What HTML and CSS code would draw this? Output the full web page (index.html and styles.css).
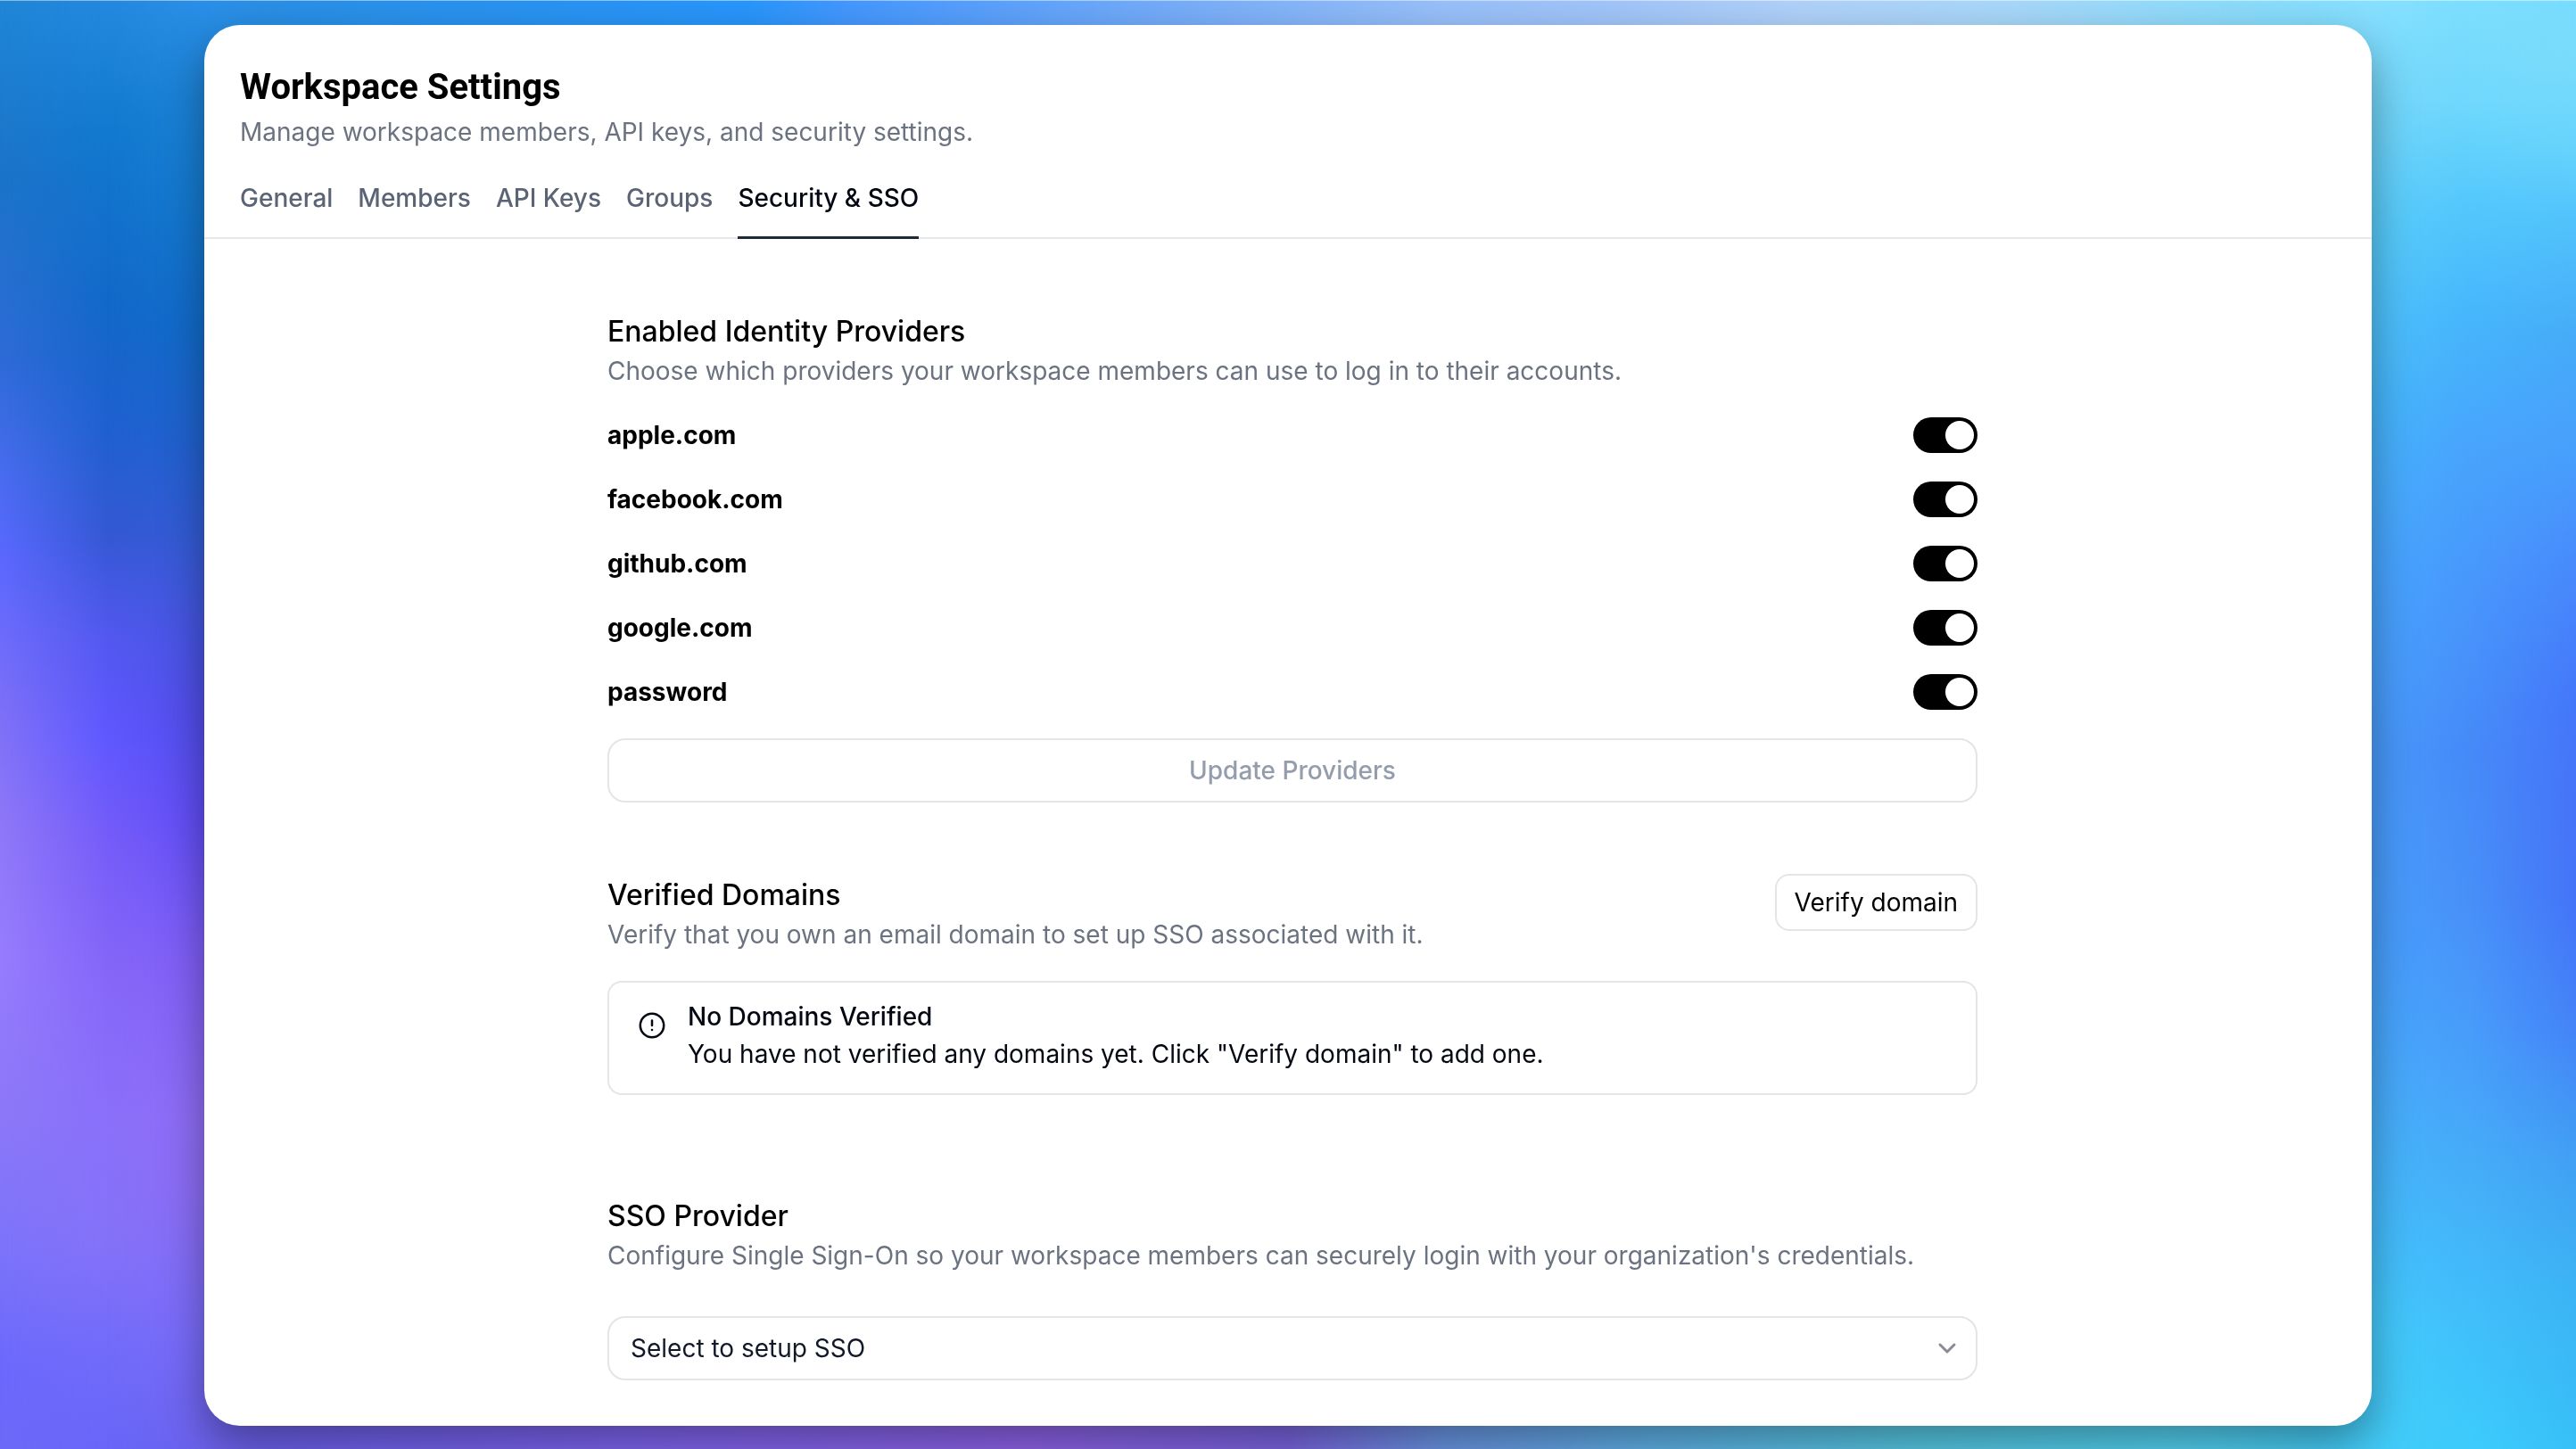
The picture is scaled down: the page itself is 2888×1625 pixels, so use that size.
FILE: index.html
```html
<!DOCTYPE html>
<html lang="en">
<head>
<meta charset="utf-8">
<meta name="viewport" content="width=device-width, initial-scale=1">
<title>Workspace Settings</title>
<link rel="stylesheet" href="styles.css">
</head>
<body>
<div class="side side-left" aria-hidden="true"></div>
<div class="side side-right" aria-hidden="true"></div>
<div class="card">
  <header class="header">
    <h1 class="title">Workspace Settings</h1>
    <p class="muted">Manage workspace members, API keys, and security settings.</p>
    <nav class="tabs" aria-label="Settings sections">
      <a class="tab" href="#general">General</a>
      <a class="tab" href="#members">Members</a>
      <a class="tab" href="#api-keys">API Keys</a>
      <a class="tab" href="#groups">Groups</a>
      <a class="tab tab-active" href="#security" aria-current="page">Security &amp; SSO</a>
    </nav>
  </header>
  <main class="content" id="security">
    <section class="section">
      <h2 class="heading">Enabled Identity Providers</h2>
      <p class="muted">Choose which providers your workspace members can use to log in to their accounts.</p>
      <div class="providers">
        <div class="provider"><label for="p-apple">apple.com</label><input class="switch" type="checkbox" role="switch" id="p-apple" checked></div>
        <div class="provider"><label for="p-facebook">facebook.com</label><input class="switch" type="checkbox" role="switch" id="p-facebook" checked></div>
        <div class="provider"><label for="p-github">github.com</label><input class="switch" type="checkbox" role="switch" id="p-github" checked></div>
        <div class="provider"><label for="p-google">google.com</label><input class="switch" type="checkbox" role="switch" id="p-google" checked></div>
        <div class="provider"><label for="p-password">password</label><input class="switch" type="checkbox" role="switch" id="p-password" checked></div>
      </div>
      <button class="button button-wide" type="button" disabled>Update Providers</button>
    </section>
    <section class="section">
      <div class="section-top">
        <div>
          <h2 class="heading">Verified Domains</h2>
          <p class="muted">Verify that you own an email domain to set up SSO associated with it.</p>
        </div>
        <button class="button button-small" type="button">Verify domain</button>
      </div>
      <div class="alert">
        <svg class="alert-icon" viewBox="0 0 32 32" fill="none" stroke="currentColor" stroke-width="2.5" stroke-linecap="round" aria-hidden="true">
          <circle cx="16" cy="16" r="13.2"/>
          <path d="M16 10.5v5.5M16 21v.1"/>
        </svg>
        <div>
          <h3 class="alert-title">No Domains Verified</h3>
          <p class="alert-text">You have not verified any domains yet. Click "Verify domain" to add one.</p>
        </div>
      </div>
    </section>
    <section class="section section-sso">
      <h2 class="heading"><label for="sso">SSO Provider</label></h2>
      <p class="muted">Configure Single Sign-On so your workspace members can securely login with your organization's credentials.</p>
      <div class="select-wrap">
        <select class="select" id="sso">
          <option>Select to setup SSO</option>
        </select>
        <svg class="chevron" viewBox="0 0 24 24" fill="none" stroke="currentColor" stroke-width="3" stroke-linecap="round" stroke-linejoin="round" aria-hidden="true"><path d="M4 8l8 8 8-8"/></svg>
      </div>
    </section>
  </main>
</div>
</body>
</html>
```
FILE: styles.css
```css
* { box-sizing: border-box; margin: 0; }

body {
  min-height: 100vh;
  padding: 27px 229px 28px;
  border-top: 1px solid rgba(255, 255, 255, .45);
  font-family: Inter, "Liberation Sans", sans-serif;
  font-size: 28px;
  line-height: 40px;
  color: #000;
  background:
    linear-gradient(to right, #1b86cf, #2a90e4 8%, #2896fc 29%, #4498ff 33%, #74acfa 45%, #98c0fa 56%, #a2c6fa 63%, #b0d2fa 70%, #a8d8fa 78%, #90dcfc 85%, #78dcfe) top / 100% 50% no-repeat,
    linear-gradient(to right, #6c6af8, #7062f0 12%, #8066f4 24%, #9064ec 40%, #7c66e4 50%, #6c98e8 56%, #60b4ec 64%, #58cce8 74%, #54d4f4 84%, #44ccf8) bottom / 100% 50% no-repeat;
}

/* Colour fields either side of the card: three vertical ramps blended across */
.side { position: fixed; top: 0; bottom: 0; width: 400px; z-index: -1; }
.side::before, .side::after { content: ""; position: absolute; inset: 0; }
.side-left {
  left: 0;
  background: linear-gradient(#1f86d6, #1b74c8 12%, #2f6bd8 25%, #4a6cf0 33%, #5a68ff 38%, #7a6ff8 48%, #8f78f8 57%, #967cfe 66%, #8c78f8 77%, #7c74fa 86%, #6c68fc 95%, #6c6af8);
  -webkit-mask-image: linear-gradient(to right, #000 229px, transparent);
  mask-image: linear-gradient(to right, #000 229px, transparent);
}
.side-left::before {
  background: linear-gradient(#2389de, #1279d0 9%, #1268c8 21%, #2060d0 30%, #3558d4 37%, #5358f0 44%, #5f58ff 51%, #765cf8 58%, #8668f8 68%, #8a70fa 77%, #8472f8 86%, #746cfa 92%, #6866f8);
  -webkit-mask-image: linear-gradient(to right, transparent, #000 120px);
  mask-image: linear-gradient(to right, transparent, #000 120px);
}
.side-left::after {
  background: linear-gradient(#2b90e8, #1d84d8 7%, #147ad0 15%, #126ccc 23%, #2262d0 31%, #3c5ada 40%, #504ce8 49%, #604cf8 57%, #7c5cf8 65%, #906cf6 77%, #8c6cf6 83%, #7a6cfa 92%, #6c62ec);
  -webkit-mask-image: linear-gradient(to right, transparent 120px, #000 240px);
  mask-image: linear-gradient(to right, transparent 120px, #000 240px);
}
.side-right {
  right: 0;
  background: linear-gradient(#78dcfe, #7adcfc 4%, #68d4fc 10%, #52c4fc 15%, #46acf8 23%, #48a0fc 31%, #4888fc 40%, #4478fa 48%, #4674f8 55%, #4474f8 62%, #4484f8 71%, #42a0f4 80%, #3cb4f4 89%, #38c0f8);
  -webkit-mask-image: linear-gradient(to left, #000 229px, transparent);
  mask-image: linear-gradient(to left, #000 229px, transparent);
}
.side-right::before {
  background: linear-gradient(#7cdefe, #70d8fc 7%, #54c8fc 14%, #46b6fc 22%, #48a4fc 31%, #4898fc 40%, #468af8 52%, #4890f8 62%, #489cfa 71%, #46acf8 80%, #42bcfa 89%, #3cccfc);
  -webkit-mask-image: linear-gradient(to left, transparent, #000 120px);
  mask-image: linear-gradient(to left, transparent, #000 120px);
}
.side-right::after {
  background: linear-gradient(#88e0ff, #70d4fa 9%, #58ccfa 16%, #46b8fc 28%, #48a8ff 38%, #489cfc 52%, #48a0fe 65%, #48b0fc 77%, #44c0fe 86%, #44ccfc 92%, #44ccf8);
  -webkit-mask-image: linear-gradient(to left, transparent 120px, #000 240px);
  mask-image: linear-gradient(to left, transparent 120px, #000 240px);
}

.card {
  min-height: calc(100vh - 56px);
  padding-bottom: 51px;
  background: #fff;
  border-radius: 40px;
  box-shadow: 0 20px 50px rgba(0, 0, 0, .38);
}

.header { padding: 46px 40px 0; border-bottom: 2px solid #e5e7eb; }
.title { font-family: Roboto, Inter, sans-serif; font-size: 40px; line-height: 48px; font-weight: 700; margin-bottom: 6px; }
.muted { color: #6b7280; }

.tabs { display: flex; gap: 28px; margin-top: 24px; }
.tab {
  height: 76px;
  padding-top: 10px;
  margin-bottom: -2px;
  color: #5b6474;
  font-weight: 500;
  text-decoration: none;
}
.tab-active { color: #030712; border-bottom: 3px solid #1f2937; }

.content { width: 100%; max-width: 1546px; margin: 0 auto; padding: 80px 0 0 10px; }
.section { margin-bottom: 80px; }
.section-sso { margin: 0; padding-top: 32px; }
.heading { font-size: 32px; line-height: 48px; font-weight: 500; }

.providers { display: grid; gap: 32px; margin: 32px 0; }
.provider { display: flex; justify-content: space-between; align-items: center; font-weight: 700; }

.switch {
  appearance: none;
  width: 72px;
  height: 40px;
  margin: 0;
  padding: 4px;
  border-radius: 20px;
  background: #000;
  display: flex;
}
.switch::before {
  content: "";
  width: 32px;
  height: 32px;
  border-radius: 50%;
  background: #fff;
}
.switch:checked { justify-content: flex-end; }

.button {
  font: inherit;
  color: #000;
  background: #fff;
  border: 2px solid #e4e4e9;
}
.button-wide { width: 100%; height: 72px; border-radius: 20px; font-weight: 500; }
.button-wide:disabled { color: #949dab; }
.button-small { height: 64px; padding: 0 20px; border-radius: 16px; }

.section-top { display: flex; justify-content: space-between; align-items: flex-start; }

.alert {
  display: flex;
  gap: 24px;
  height: 128px;
  margin-top: 32px;
  padding: 18px 32px;
  border: 2px solid #e4e4e9;
  border-radius: 16px;
  color: #030712;
}
.alert-icon { width: 32px; height: 32px; margin-top: 14px; }
.alert-title { font-size: 28px; line-height: 40px; font-weight: 500; }
.alert-text { line-height: 44px; }

.select-wrap { display: grid; align-items: center; margin-top: 48px; }
.select-wrap > * { grid-area: 1 / 1; }
.select {
  appearance: none;
  width: 100%;
  height: 72px;
  padding: 0 24px;
  border: 2px solid #e4e4e9;
  border-radius: 20px;
  background: #fff;
  font: inherit;
  color: #111827;
}
.chevron { justify-self: end; width: 24px; height: 24px; margin-right: 22px; color: #8a8b92; pointer-events: none; }
```
